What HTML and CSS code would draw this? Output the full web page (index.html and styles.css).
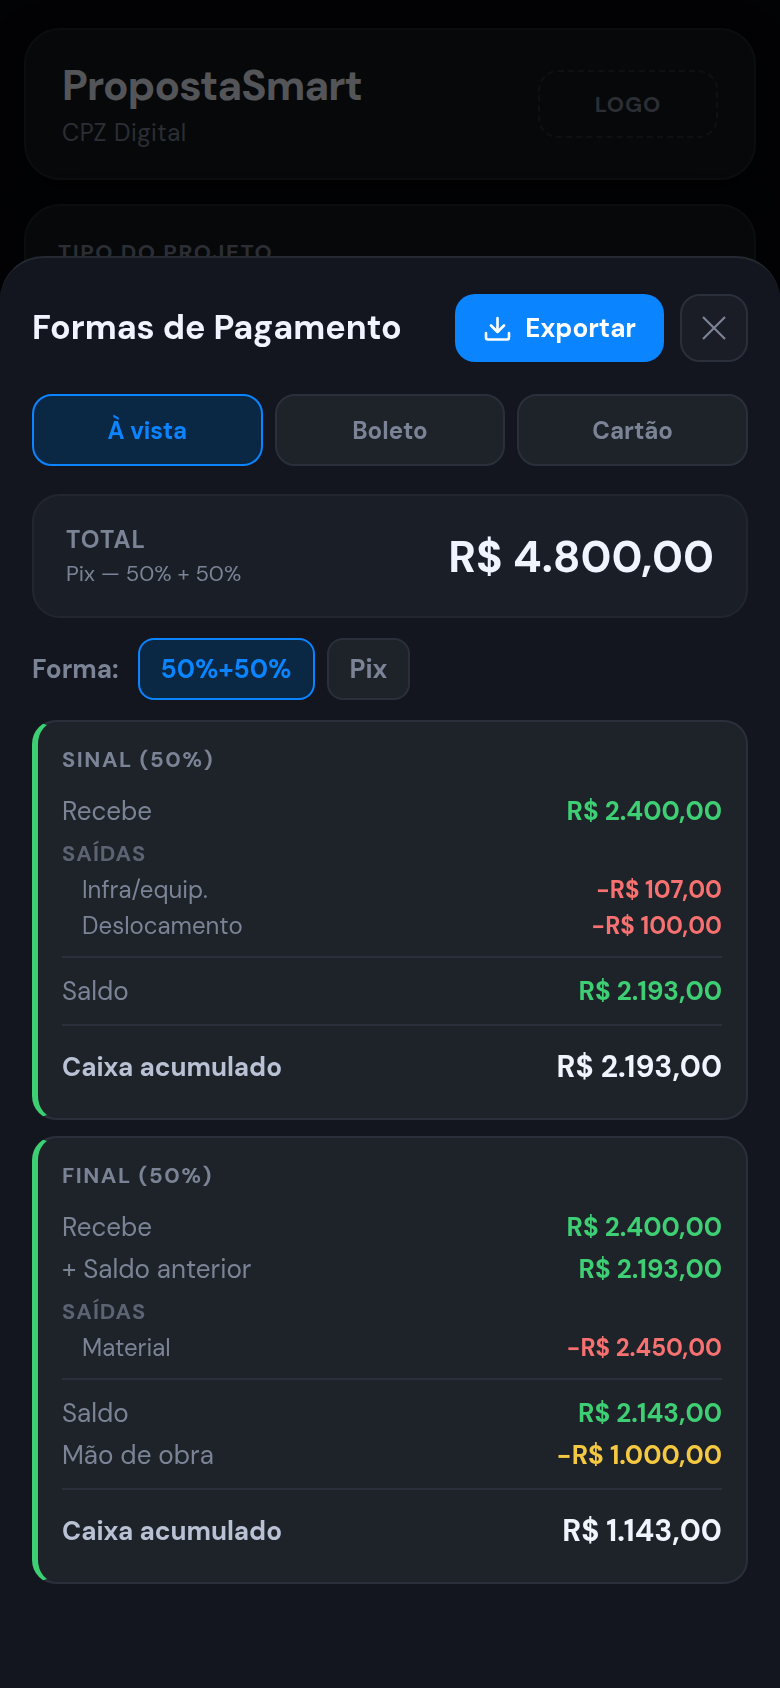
FILE: index.html
```html
<!DOCTYPE html>
<html lang="pt-BR">

<head>
    <meta charset="utf-8">
    <title>PropostaSmart</title>
    <meta name="viewport" content="width=device-width, initial-scale=1.0" />
    <link rel="stylesheet" href="styles.css">
</head>

<body>
    <main class="page">
        <header class="card brand">
            <div>
                <h1>PropostaSmart</h1>
                <p class="brand-sub">CPZ Digital</p>
            </div>
            <div class="logo-box">LOGO</div>
        </header>
        <section class="card project">
            <h2>Tipo do projeto</h2>
        </section>
    </main>

    <div class="overlay">
        <div class="sheet" role="dialog" aria-modal="true" aria-labelledby="sheet-title">
            <div class="sheet-head">
                <h2 id="sheet-title">Formas de Pagamento</h2>
                <button type="button" class="btn-export">
                    <svg width="28" height="28" viewBox="0 0 28 28" fill="none" stroke="currentColor" stroke-width="2.6" stroke-linecap="round" stroke-linejoin="round">
                        <path d="M14.500 4v14M8 11.500l6.500 6.500 6.500-6.500M3 19v4.500a2 2 0 0 0 2 2h19a2 2 0 0 0 2-2v-4.500" />
                    </svg>
                    Exportar
                </button>
                <button type="button" class="btn-close" aria-label="Fechar">
                    <svg width="24" height="24" viewBox="0 0 24 24" fill="none" stroke="currentColor" stroke-width="2.2">
                        <path d="M1 1l22 22M23 1L1 23" />
                    </svg>
                </button>
            </div>

            <div class="tabs">
                <button type="button" class="tab active">À vista</button>
                <button type="button" class="tab">Boleto</button>
                <button type="button" class="tab">Cartão</button>
            </div>

            <div class="total">
                <div>
                    <p class="total-label">TOTAL</p>
                    <p class="total-sub">Pix — 50% + 50%</p>
                </div>
                <strong class="total-value">R$ 4.800,00</strong>
            </div>

            <div class="forma">
                <span class="forma-label">Forma:</span>
                <button type="button" class="chip active">50%+50%</button>
                <button type="button" class="chip">Pix</button>
            </div>

            <section class="stage">
                <h3>Sinal (50%)</h3>
                <dl>
                    <div class="row"><dt>Recebe</dt><dd class="green">R$ 2.400,00</dd></div>
                </dl>
                <h4>Saídas</h4>
                <dl>
                    <div class="row sub"><dt>Infra/equip.</dt><dd class="red">−R$ 107,00</dd></div>
                    <div class="row sub"><dt>Deslocamento</dt><dd class="red">−R$ 100,00</dd></div>
                </dl>
                <hr>
                <dl>
                    <div class="row"><dt>Saldo</dt><dd class="green">R$ 2.193,00</dd></div>
                </dl>
                <hr>
                <dl>
                    <div class="row cash"><dt>Caixa acumulado</dt><dd>R$ 2.193,00</dd></div>
                </dl>
            </section>

            <section class="stage">
                <h3>Final (50%)</h3>
                <dl>
                    <div class="row"><dt>Recebe</dt><dd class="green">R$ 2.400,00</dd></div>
                    <div class="row"><dt>+ Saldo anterior</dt><dd class="green">R$ 2.193,00</dd></div>
                </dl>
                <h4>Saídas</h4>
                <dl>
                    <div class="row sub"><dt>Material</dt><dd class="red">−R$ 2.450,00</dd></div>
                </dl>
                <hr>
                <dl>
                    <div class="row"><dt>Saldo</dt><dd class="green">R$ 2.143,00</dd></div>
                    <div class="row"><dt>Mão de obra</dt><dd class="yellow">−R$ 1.000,00</dd></div>
                </dl>
                <hr>
                <dl>
                    <div class="row cash"><dt>Caixa acumulado</dt><dd>R$ 1.143,00</dd></div>
                </dl>
            </section>
        </div>
    </div>
</body>

</html>
```

FILE: styles.css
```css
* {
    box-sizing: border-box;
    margin: 0;
    padding: 0;
}

body {
    font-family: "DM Sans", Inter, sans-serif;
    color: #f0f4ff;
    background-color: #07090e;
}

button {
    font-family: inherit;
    cursor: pointer;
}

/* page behind the sheet */
.page {
    display: flex;
    flex-direction: column;
    gap: 24px;
    padding: 28px 24px;
}

.card {
    border: 2px solid #212529;
    border-radius: 36px;
    background-color: #13171b;
    box-shadow: 0 8px 32px rgba(0, 0, 0, 0.5);
}

.brand {
    display: flex;
    align-items: center;
    justify-content: space-between;
    padding: 29px 36px;
}

.brand h1 {
    font-size: 42px;
    line-height: 54px;
    letter-spacing: -0.02em;
    color: #f0f4ff;
}

.brand-sub {
    margin-top: 4px;
    font-size: 24px;
    line-height: 32px;
    letter-spacing: 0.02em;
    color: #7b8496;
}

.logo-box {
    display: flex;
    align-items: center;
    justify-content: center;
    width: 180px;
    height: 68px;
    border: 2px dashed #2a303b;
    border-radius: 20px;
    font-size: 22px;
    font-weight: 700;
    letter-spacing: 1px;
    color: #7b8496;
}

.project {
    padding: 31px 32px;
}

.project h2 {
    font-size: 22px;
    line-height: 32px;
    letter-spacing: 0.07em;
    text-transform: uppercase;
    color: #7b8496;
}

/* bottom sheet */
.overlay {
    position: fixed;
    inset: 0;
    display: flex;
    align-items: flex-end;
    background-color: rgba(0, 0, 0, 0.65);
}

.sheet {
    width: 100%;
    max-height: 92vh;
    overflow-y: auto;
    padding: 36px 32px 104px;
    border-top: 2px solid #242932;
    border-radius: 44px 44px 0 0;
    background-color: #13161e;
}

.sheet-head {
    display: flex;
    align-items: center;
    gap: 16px;
    margin-bottom: 32px;
}

.sheet-head h2 {
    flex: 1;
    font-size: 34px;
    line-height: 40px;
    white-space: nowrap;
}

.btn-export {
    display: flex;
    align-items: center;
    gap: 14px;
    height: 68px;
    padding: 0 28px;
    border: 0;
    border-radius: 20px;
    background-color: #0a84ff;
    color: #fff;
    font-size: 26px;
    font-weight: 700;
}

.btn-close {
    display: flex;
    align-items: center;
    justify-content: center;
    width: 68px;
    height: 68px;
    border: 2px solid #2a303b;
    border-radius: 20px;
    background-color: #1a1d25;
    color: #7b8496;
}

.tabs {
    display: grid;
    grid-template-columns: repeat(3, 1fr);
    gap: 12px;
    margin-bottom: 28px;
}

.tab,
.chip {
    border: 2px solid #2a303b;
    background-color: #1e2229;
    color: #7b8496;
    font-size: 24px;
    font-weight: 700;
}

.tab {
    height: 72px;
    border-radius: 20px;
}

.tab.active,
.chip.active {
    border-color: #0a84ff;
    background-color: #0a2744;
    color: #0a84ff;
}

.total {
    display: flex;
    align-items: center;
    justify-content: space-between;
    margin-bottom: 20px;
    padding: 27px 32px 25px;
    border: 2px solid #22262e;
    border-radius: 28px;
    background-color: #1a1e26;
}

.total-label,
.total-sub {
    line-height: 34px;
    color: #7b8496;
}

.total-label {
    font-size: 24px;
    font-weight: 700;
    letter-spacing: 1px;
}

.total-sub {
    font-size: 22px;
}

.total-value {
    font-size: 44px;
    line-height: 56px;
}

.forma {
    display: flex;
    align-items: center;
    gap: 12px;
    margin-bottom: 20px;
}

.forma-label {
    margin-right: 7px;
    font-size: 26px;
    font-weight: 700;
    color: #7b8496;
}

.chip {
    height: 62px;
    padding: 0 21px;
    border-radius: 16px;
    font-size: 26px;
}

/* payment stages */
.stage {
    padding: 22px 24px;
    border: 2px solid #2a303b;
    border-left: 6px solid #3ecf74;
    border-radius: 24px;
    background-color: #1e2229;
}

.stage + .stage {
    margin-top: 16px;
}

.stage h3,
.stage h4 {
    font-size: 22px;
    text-transform: uppercase;
    color: #7b8496;
}

.stage h3 {
    margin-bottom: 14px;
    line-height: 32px;
    letter-spacing: 0.07em;
}

.stage h4 {
    padding-top: 4px;
    line-height: 36px;
    letter-spacing: 1px;
    color: #5c6373;
}

.stage hr {
    height: 2px;
    margin: 12px 0;
    border: 0;
    background-color: #2a303b;
}

.row {
    display: flex;
    align-items: center;
    justify-content: space-between;
    font-size: 26px;
    line-height: 42px;
    color: #7b8496;
}

.row dd {
    font-weight: 700;
}

.row.sub {
    padding-left: 20px;
    font-size: 24px;
    line-height: 36px;
}

.row.cash {
    line-height: 58px;
    font-weight: 700;
    color: #b8c2d4;
}

.row.cash dd {
    font-size: 30px;
    color: #f0f4ff;
}

.row .green {
    color: #3ecf74;
}

.row .red {
    color: #f87171;
}

.row .yellow {
    color: #f5c842;
}
```
